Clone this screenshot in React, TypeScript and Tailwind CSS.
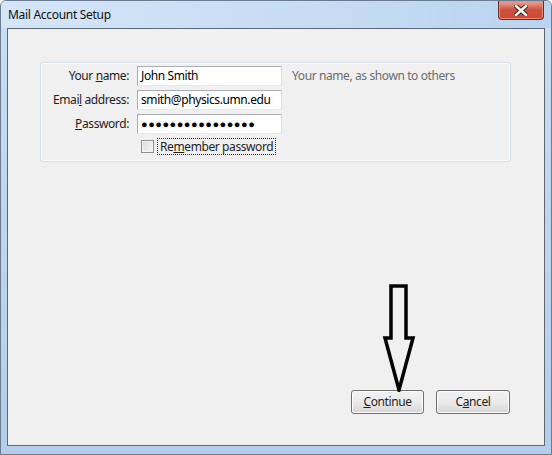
import { useState } from 'react'

const font = { fontFamily: '"Segoe UI", "Noto Sans", "Open Sans", sans-serif' }

function Field({ label, children }: { label: React.ReactNode; children: React.ReactNode }) {
  return (
    <div className="flex items-center">
      <label className="w-[88px] text-right text-[12px] tracking-[-0.4px] text-[#1e1e1e]">{label}</label>
      <div className="ml-[8px]">{children}</div>
    </div>
  )
}

function TextBox({ children }: { children: React.ReactNode }) {
  return (
    <div className="flex h-[20px] w-[145px] items-center border border-[#abadb3] border-b-[#e3e9ef] border-r-[#dbdfe6] bg-white px-[3px] text-[12px] tracking-[-0.4px] text-black">
      {children}
    </div>
  )
}

function Button({ children, w }: { children: React.ReactNode; w: string }) {
  return (
    <button
      className={`${w} h-[24px] rounded-[3px] border border-[#707070] bg-gradient-to-b from-[#f2f2f2] via-[#ebebeb] to-[#d6d6d6] text-[12px] tracking-[-0.4px] text-[#1e1e1e] shadow-[inset_0_0_0_1px_#fcfcfc]`}
    >
      {children}
    </button>
  )
}

export default function App() {
  const [remember, setRemember] = useState(false)

  return (
    <div
      style={font}
      className="flex h-[455px] w-[552px] flex-col overflow-hidden rounded-t-[6px] border border-[#6b7c90] bg-gradient-to-b from-[#c9def4] to-[#b3cdea]"
    >
      {/* title bar */}
      <div className="flex h-[27px] shrink-0 items-start justify-between bg-gradient-to-r from-[#d4e5f7] via-[#c8ddf3] to-[#b9d4f0]">
        <span className="ml-[7px] mt-[5px] text-[12px] tracking-[-0.3px] text-[#111]">Mail Account Setup</span>
        <button className="mr-[7px] flex h-[19px] w-[46px] items-center justify-center rounded-b-[4px] border border-t-0 border-[#6b2a22] bg-gradient-to-b from-[#e9a99b] via-[#c9503f] to-[#d8442e] shadow-[inset_0_0_0_1px_#e78f7f]">
          <svg width="14" height="11" viewBox="0 0 14 11">
            <path d="M2 1 L12 10 M12 1 L2 10" stroke="#3b2522" strokeWidth="4.5" strokeLinecap="square" />
            <path d="M2 1 L12 10 M12 1 L2 10" stroke="#f4f4f4" strokeWidth="2.6" strokeLinecap="square" />
          </svg>
        </button>
      </div>

      {/* client area */}
      <div className="relative mx-[6px] flex flex-1 flex-col border border-[#5d6873] bg-[#f0f0f0]">
        <div className="ml-[32px] mt-[33px] w-[471px] rounded-[3px] border border-[#d5dfe5] pb-[6px] pt-[3px] shadow-[inset_0_0_0_1px_#fbfbfb]">
          <div className="flex flex-col gap-[4px]">
            <div className="flex items-center">
              <Field
                label={
                  <>
                    Your <span className="underline">n</span>ame:
                  </>
                }
              >
                <TextBox>John Smith</TextBox>
              </Field>
              <span className="ml-[10px] text-[12px] tracking-[-0.4px] text-[#6d6d6d]">
                Your name, as shown to others
              </span>
            </div>
            <Field
              label={
                <>
                  Emai<span className="underline">l</span> address:
                </>
              }
            >
              <TextBox>smith@physics.umn.edu</TextBox>
            </Field>
            <Field
              label={
                <>
                  <span className="underline">P</span>assword:
                </>
              }
            >
              <TextBox>
                <span className="text-[11px] tracking-[0.5px]">●●●●●●●●●●●●●●●●</span>
              </TextBox>
            </Field>
          </div>
          <div className="ml-[100px] mt-[4px] flex items-center">
            <button
              onClick={() => setRemember(!remember)}
              className="h-[13px] w-[13px] border border-[#8e8f8f] bg-gradient-to-br from-[#dcdcdc] to-[#f6f6f6] shadow-[inset_0_0_0_1px_#f4f4f4]"
            />
            <span className="ml-[3px] border border-dotted border-[#333] px-[2px] text-[12px] leading-[15px] tracking-[-0.4px] text-[#1e1e1e]">
              Re<span className="underline">m</span>ember password
            </span>
          </div>
        </div>

        <div className="flex-1" />

        <div className="mb-[31px] mr-[34px] flex justify-end gap-[12px]">
          <Button w="w-[73px]">
            <span className="underline">C</span>ontinue
          </Button>
          <Button w="w-[74px]">
            C<span className="underline">a</span>ncel
          </Button>
        </div>

        {/* hand-drawn annotation arrow */}
        <svg className="absolute left-[374px] top-[255px]" width="34" height="108" viewBox="0 0 34 108">
          <path
            d="M9 2 L24 2 L24 54 L31 54 L17 106 L3 54 L9 54 Z"
            fill="none"
            stroke="#000"
            strokeWidth="3.5"
            strokeLinejoin="miter"
          />
        </svg>
      </div>
      <div className="h-[8px] shrink-0" />
    </div>
  )
}
